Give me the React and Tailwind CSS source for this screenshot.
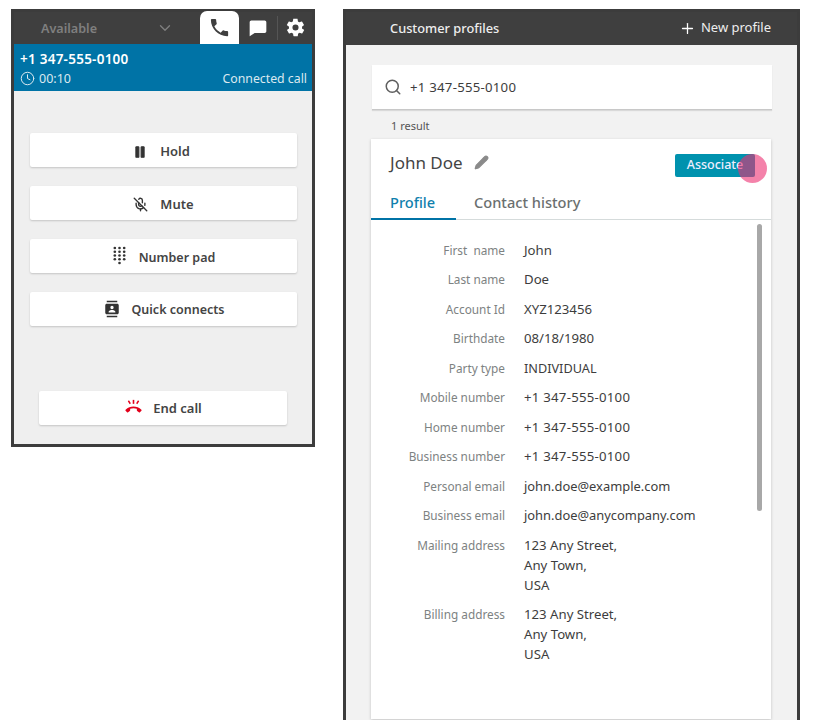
import React from "react";
import { Search, Plus, Pause, MicOff, Pencil, Clock, ChevronDown } from "lucide-react";

const font = "font-['Noto_Sans',sans-serif]";

const PhoneIcon = ({ className }) => (
  <svg viewBox="0 0 24 24" className={className} fill="currentColor">
    <path d="M6.6 10.8c1.4 2.8 3.8 5.1 6.6 6.6l2.2-2.2c.3-.3.7-.4 1-.2 1.1.4 2.3.6 3.6.6.6 0 1 .4 1 1V20c0 .6-.4 1-1 1C10.6 21 3 13.4 3 4c0-.6.4-1 1-1h3.5c.6 0 1 .4 1 1 0 1.2.2 2.4.6 3.6.1.3 0 .7-.2 1l-2.3 2.2z" />
  </svg>
);

const ChatIcon = ({ className }) => (
  <svg viewBox="0 0 24 24" className={className} fill="currentColor">
    <path d="M4 3h16c1.100 0 2 .9 2 2v11c0 1.100-.9 2-2 2H8l-6 4V5c0-1.100.9-2 2-2z" />
  </svg>
);

const GearIcon = ({ className }) => (
  <svg viewBox="0 0 24 24" className={className} fill="currentColor">
    <path d="M19.4 13c.1-.3.1-.7.1-1s0-.7-.1-1l2.100-1.600c.2-.2.2-.4.1-.6l-2-3.500c-.1-.2-.4-.3-.6-.2l-2.500 1c-.5-.4-1.100-.7-1.700-1l-.4-2.600c0-.3-.2-.5-.5-.5h-4c-.3 0-.5.2-.5.400l-.4 2.700c-.6.2-1.100.6-1.700 1l-2.500-1c-.2-.1-.5 0-.6.2l-2 3.500c-.1.2-.1.400.1.600L4.600 11c0 .3-.1.700-.1 1s0 .7.1 1l-2.100 1.600c-.2.2-.2.4-.1.6l2 3.500c.1.2.4.3.6.2l2.500-1c.5.4 1.100.7 1.700 1l.4 2.600c0 .3.2.5.5.5h4c.3 0 .5-.2.500-.4l.4-2.700c.6-.2 1.100-.6 1.700-1l2.500 1c.2.1.5 0 .6-.2l2-3.500c.1-.2.1-.4-.1-.6L19.400 13zM12 15.500a3.500 3.500 0 1 1 0-7 3.500 3.500 0 0 1 0 7z" />
  </svg>
);

const KeypadIcon = ({ className }) => (
  <svg viewBox="0 0 16 20" className={className} fill="currentColor">
    {[2, 6, 10, 14].flatMap((y) =>
      [3, 8, 13].map((x) => <circle key={`${x}-${y}`} cx={x} cy={y} r="1.400" />)
    )}
    <circle cx="8" cy="18" r="1.400" />
  </svg>
);

const ContactsIcon = ({ className }) => (
  <svg viewBox="0 0 24 24" className={className} fill="currentColor">
    <path d="M5 1h14v2H5zM5 21h14v2H5zM5 5h14c1.100 0 2 .9 2 2v10c0 1.100-.9 2-2 2H5c-1.100 0-2-.9-2-2V7c0-1.100.9-2 2-2zm7 2.800a2.200 2.200 0 1 0 0 4.400 2.200 2.200 0 0 0 0-4.400zM7.500 16.500h9V15.500c0-1.500-3-2.300-4.500-2.300s-4.500.8-4.500 2.300z" fillRule="evenodd" />
  </svg>
);

const HangupIcon = ({ className }) => (
  <svg viewBox="0 0 24 20" className={className} fill="#e3001b">
    <path d="M12 9.500c-3.600 0-7.200 1.300-10 3.900-.4.400-.4 1 0 1.400l1.900 1.900c.4.400 1 .4 1.300 0l2.200-1.700c.3-.2.400-.5.400-.8v-1.900c1.400-.5 2.800-.7 4.200-.7s2.800.2 4.200.7v1.900c0 .3.100.6.400.8l2.200 1.700c.4.400.9.400 1.300 0l1.900-1.900c.4-.4.400-1 0-1.400-2.800-2.600-6.400-3.900-10-3.900z" />
    <rect x="11" y="1" width="2" height="5" />
    <path d="M4.800 2.800l1.500-1.200 2.400 3.700-1.500 1.100zM19.200 2.800l-1.500-1.200-2.400 3.700 1.500 1.100z" />
  </svg>
);

const CallButton = ({ icon, label, size = "text-[13px]", top = "pt-[3px]" }) => (
  <div className={`flex h-[34px] items-center justify-center rounded-[2px] bg-white shadow-[0_1px_2px_rgba(0,0,0,0.18)] font-semibold text-[#444] ${size} ${top}`}>
    {icon}
    <span>{label}</span>
  </div>
);

const fields = [
  ["First  name", "John"],
  ["Last name", "Doe"],
  ["Account Id", "XYZ123456"],
  ["Birthdate", "08/18/1980"],
  ["Party type", "INDIVIDUAL", "text-[12.7px]"],
  ["Mobile number", "+1 347-555-0100", "text-[13.2px] tracking-[0.25px]"],
  ["Home number", "+1 347-555-0100", "text-[13.2px] tracking-[0.25px]"],
  ["Business number", "+1 347-555-0100", "text-[13.2px] tracking-[0.25px]"],
  ["Personal email", "john.doe@example.com", "text-[12.9px]"],
  ["Business email", "john.doe@anycompany.com", "text-[12.9px]"],
];

const Field = ({ label, children, valueClass = "text-[13.2px]" }) => (
  <div className="flex items-start">
    <div className="w-[134px] whitespace-pre text-right text-[11.8px] leading-[20px] text-[#7d8282]">{label}</div>
    <div className={`ml-[19px] leading-[20px] text-[#3d3d3d] ${valueClass}`}>{children}</div>
  </div>
);

const Address = () => (
  <>
    123 Any Street,
    <br />
    Any Town,
    <br />
    USA
  </>
);

export default function App() {
  return (
    <div className={`flex h-[720px] items-start overflow-hidden bg-white pl-[11px] pt-[9px] ${font}`}>
      {/* softphone panel */}
      <div className="flex h-[438px] w-[304px] shrink-0 flex-col border-[3px] border-[#3c3c3c] bg-[#efefef]">
        <div className="flex h-[32px] shrink-0 items-end bg-[#3f3f3f]">
          <span className="ml-[27px] self-center pt-[3px] text-[12.6px] font-semibold text-[#7f7f7f]">Available</span>
          <ChevronDown className="mb-[7px] ml-[59px] h-[18px] w-[18px] text-[#7f7f7f]" strokeWidth={1.800} />
          <div className="ml-[26px] flex h-[33px] w-[39px] items-center justify-center rounded-t-[7px] bg-white text-[#3f3f3f]">
            <PhoneIcon className="h-[23px] w-[23px]" />
          </div>
          <ChatIcon className="mb-[6px] ml-[9px] h-[20px] w-[20px] text-white" />
          <div className="mb-[4px] ml-[9px] h-[24px] w-px bg-[#555]" />
          <GearIcon className="mb-[6px] ml-[7px] h-[21px] w-[21px] text-white" />
        </div>
        <div className="flex h-[47px] shrink-0 flex-col bg-[#0073a6] pl-[6px] pr-[5px] pt-[6px] text-white">
          <div className="text-[13.5px] font-semibold leading-[18px] tracking-[0.25px]">+1 347-555-0100</div>
          <div className="flex items-center justify-between pt-[1px] text-[12.3px] leading-[19px] text-[#dbe9f0]">
            <div className="flex items-center gap-[4px]">
              <Clock className="h-[15px] w-[15px]" strokeWidth={1.600} />
              <span className="text-[12.5px]">00:10</span>
            </div>
            <span>Connected call</span>
          </div>
        </div>
        <div className="flex flex-col gap-[19px] pl-[16px] pr-[15px] pt-[42px]">
          <CallButton
            label="Hold"
            icon={<Pause className="mr-[13px] -ml-[4px] h-[14px] w-[14px] text-[#333]" fill="currentColor" />}
          />
          <CallButton
            label="Mute"
            icon={<MicOff className="mr-[12px] h-[15px] w-[15px] text-[#333]" strokeWidth={2.200} />}
          />
          <CallButton
            label="Number pad"
            size="text-[12.5px]"
            top="pt-[4px]"
            icon={<KeypadIcon className="mr-[12px] -mt-[6px] h-[19px] w-[15px] text-[#333]" />}
          />
          <CallButton
            label="Quick connects"
            size="text-[12.5px]"
            icon={<ContactsIcon className="mr-[11px] -mt-[4px] h-[18px] w-[18px] text-[#333]" />}
          />
        </div>
        <div className="mt-[65px] pl-[25px] pr-[25px]">
          <CallButton
            label="End call"
            top="pt-[1px]"
            icon={<HangupIcon className="mr-[10px] -mt-[3px] h-[16px] w-[19px]" />}
          />
        </div>
      </div>

      {/* customer profiles panel */}
      <div className="ml-[28px] flex h-[760px] w-[457px] shrink-0 flex-col border-[3px] border-b-0 border-[#3c3c3c] bg-[#f2f2f2]">
        <div className="flex h-[33px] shrink-0 items-center justify-between bg-[#3f3f3f] pl-[44px] pr-[26px] text-[12.8px] text-[#eee]">
          <span className="font-medium">Customer profiles</span>
          <div className="-mt-[1px] flex items-center gap-[5px]">
            <Plus className="h-[17px] w-[17px] text-white" strokeWidth={1.800} />
            <span className="text-[13px]">New profile</span>
          </div>
        </div>
        <div className="pl-[26px] pr-[25px] pt-[20px]">
          <div className="flex h-[45px] items-center border-b border-[#c8c8c8] bg-white pl-[12px] shadow-[0_1px_1px_rgba(0,0,0,0.1)]">
            <Search className="h-[18px] w-[18px] text-[#5f5f5f]" strokeWidth={2} />
            <span className="ml-[8px] pt-[1px] text-[13.2px] tracking-[0.25px] text-[#3d3d3d]">+1 347-555-0100</span>
          </div>
          <div className="pl-[19px] pt-[8px] text-[11px] leading-[16px] text-[#555]">1 result</div>
        </div>
        <div className="ml-[25px] mr-[26px] mt-[5px] h-[580px] shrink-0 bg-white shadow-[0_1px_3px_rgba(0,0,0,0.2)]">
          <div className="relative flex h-[49px] items-center pl-[19px]">
            <span className="-mt-[2px] text-[17px] leading-[24px] text-[#444]">John Doe</span>
            <Pencil className="-mt-[2px] ml-[11px] h-[15px] w-[15px] text-[#8a8a8a]" fill="currentColor" />
            <div className="absolute left-[304px] top-[15px] flex h-[23px] w-[80px] items-center justify-center rounded-[2px] bg-[#0092ae] text-[12.5px] font-medium text-[#eef]">
              Associate
            </div>
            <div className="absolute left-[367px] top-[15px] h-[29px] w-[29px] rounded-full bg-[#ec2f72]/60" />
          </div>
          <div className="flex h-[32px] items-start border-b border-[#d5dbdb]">
            <div className="h-[32px] w-[85px] border-b-2 border-[#0073a6] pl-[19px] text-[14.6px] font-medium leading-[29px] text-[#1080ad]">
              Profile
            </div>
            <div className="pl-[18px] text-[14.6px] font-medium leading-[29px] text-[#6b6f6f]">Contact history</div>
          </div>
          <div className="relative pt-[19.5px]">
            <div className="absolute right-[9px] top-[4px] h-[287px] w-[5px] rounded-full bg-[#a8a8a8]" />
            <div className="flex flex-col gap-[9.5px]">
              {fields.map(([label, value, valueClass]) => (
                <Field key={label} label={label} valueClass={valueClass}>{value}</Field>
              ))}
              <Field label="Mailing address"><Address /></Field>
              <Field label="Billing address"><Address /></Field>
            </div>
          </div>
        </div>
      </div>
    </div>
  );
}
